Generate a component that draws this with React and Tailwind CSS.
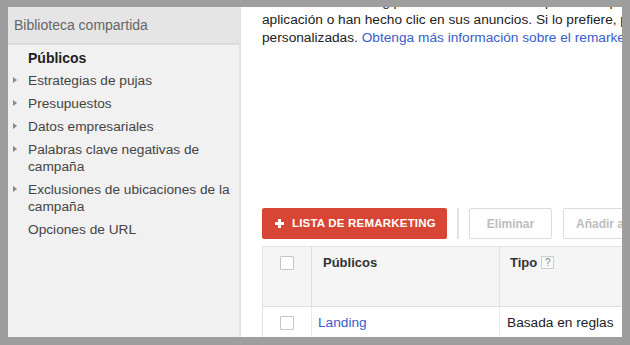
const sideItems = [
  { label: "Estrategias de pujas", arrow: true },
  { label: "Presupuestos", arrow: true },
  { label: "Datos empresariales", arrow: true },
  { label: "Palabras clave negativas de campaña", arrow: true },
  { label: "Exclusiones de ubicaciones de la campaña", arrow: true },
  { label: "Opciones de URL", arrow: false },
];

const Checkbox = () => (
  <span className="block w-[14px] h-[14px] border border-[#c6c6c6] bg-white rounded-[1px]" />
);

const App = () => {
  return (
    <div
      className="w-[630px] h-[345px] bg-[#9e9e9e] pt-[7px] px-[8px] pb-[8px] overflow-hidden"
      style={{ fontFamily: '"Liberation Sans", Arial, sans-serif' }}
    >
      <div className="flex h-full overflow-hidden">
        {/* sidebar */}
        <aside className="w-[233px] shrink-0 bg-[#f1f1f1] border-r-2 border-[#e3e3e3] flex flex-col">
          <div className="h-[38px] bg-[#e5e5e5] border-b-2 border-[#dcdcdc] flex items-center pl-[6px] text-[14px] text-[#666]">
            Biblioteca compartida
          </div>
          <div className="pt-[5px] pr-[4px]">
            <div className="pl-[20px] text-[14px] leading-[17px] font-bold text-[#222]">Públicos</div>
            <ul className="mt-[5px] flex flex-col gap-[6px]">
              {sideItems.map((it) => (
                <li key={it.label} className="relative pl-[20px] text-[13.7px] leading-[17px] text-[#444]">
                  {it.arrow && (
                    <span className="absolute left-[5px] top-[5px] w-0 h-0 border-y-[3.5px] border-y-transparent border-l-[4px] border-l-[#888]" />
                  )}
                  {it.label}
                </li>
              ))}
            </ul>
          </div>
        </aside>

        {/* main */}
        <main className="flex-1 bg-white overflow-hidden pl-[21px]">
          <div className="-mt-[14px] text-[13.7px] leading-[18px] text-[#222] whitespace-nowrap">
            <div>Utilice el remarketing para mostrar anuncios a personas que han visitado su sitio web o utilizado su</div>
            <div>aplicación o han hecho clic en sus anuncios. Si lo prefiere, puede crear listas</div>
            <div>
              personalizadas. <span className="text-[#3b5ccc]">Obtenga más información sobre el remarketing</span>
            </div>
          </div>

          <div className="mt-[161px] flex items-center h-[31px]">
            <button className="h-[31px] w-[185px] shrink-0 bg-[#d74634] rounded-[2px] flex items-center pl-[13px] gap-[8px] text-white font-bold text-[11.5px] tracking-[0.2px]">
              <svg width="9" height="9" viewBox="0 0 9 9" className="shrink-0">
                <rect x="3" y="0" width="3" height="9" fill="white" />
                <rect x="0" y="3" width="9" height="3" fill="white" />
              </svg>
              LISTA DE REMARKETING
            </button>
            <span className="ml-[10px] w-[2px] h-[31px] bg-[#e2e2e2] shrink-0" />
            <button className="ml-[10px] h-[31px] w-[83px] shrink-0 border border-[#dcdcdc] rounded-[2px] bg-white text-[12px] font-bold text-[#bdbdbd]">
              Eliminar
            </button>
            <button className="ml-[11px] h-[31px] w-[100px] shrink-0 border border-[#dcdcdc] rounded-[2px] bg-white text-[12px] font-bold text-[#bdbdbd] text-left pl-[12px] whitespace-nowrap">
              Añadir a
            </button>
          </div>

          <div className="mt-[7px] w-[520px] border-l border-t border-[#e3e3e3]">
            <div className="flex h-[60px] bg-[#f5f5f5] border-b border-[#dedede]">
              <div className="w-[49px] shrink-0 border-r border-[#e0e0e0] flex justify-center pt-[9px]">
                <Checkbox />
              </div>
              <div className="w-[188px] shrink-0 border-r border-[#e0e0e0] pl-[11px] pt-[8px] text-[13px] leading-[16px] font-bold text-[#333]">
                Públicos
              </div>
              <div className="flex-1 pl-[10px] pt-[8px] flex items-start gap-[4px] text-[13px] leading-[16px] font-bold text-[#333]">
                Tipo
                <span className="mt-[1px] w-[13px] h-[13px] border border-[#cfcfcf] bg-[#f8f8f8] text-[10px] leading-[11px] text-center text-[#888] font-normal">
                  ?
                </span>
              </div>
            </div>
            <div className="flex h-[32px] bg-white">
              <div className="w-[49px] shrink-0 border-r border-[#ececec] flex justify-center pt-[9px]">
                <Checkbox />
              </div>
              <div className="w-[188px] shrink-0 border-r border-[#ececec] pl-[6px] pt-[8px] text-[13.7px] leading-[16px] text-[#3b5ccc]">
                Landing
              </div>
              <div className="flex-1 pl-[7px] pt-[8px] text-[13.7px] leading-[16px] text-[#222]">Basada en reglas</div>
            </div>
          </div>
        </main>
      </div>
    </div>
  );
};

export default App;
